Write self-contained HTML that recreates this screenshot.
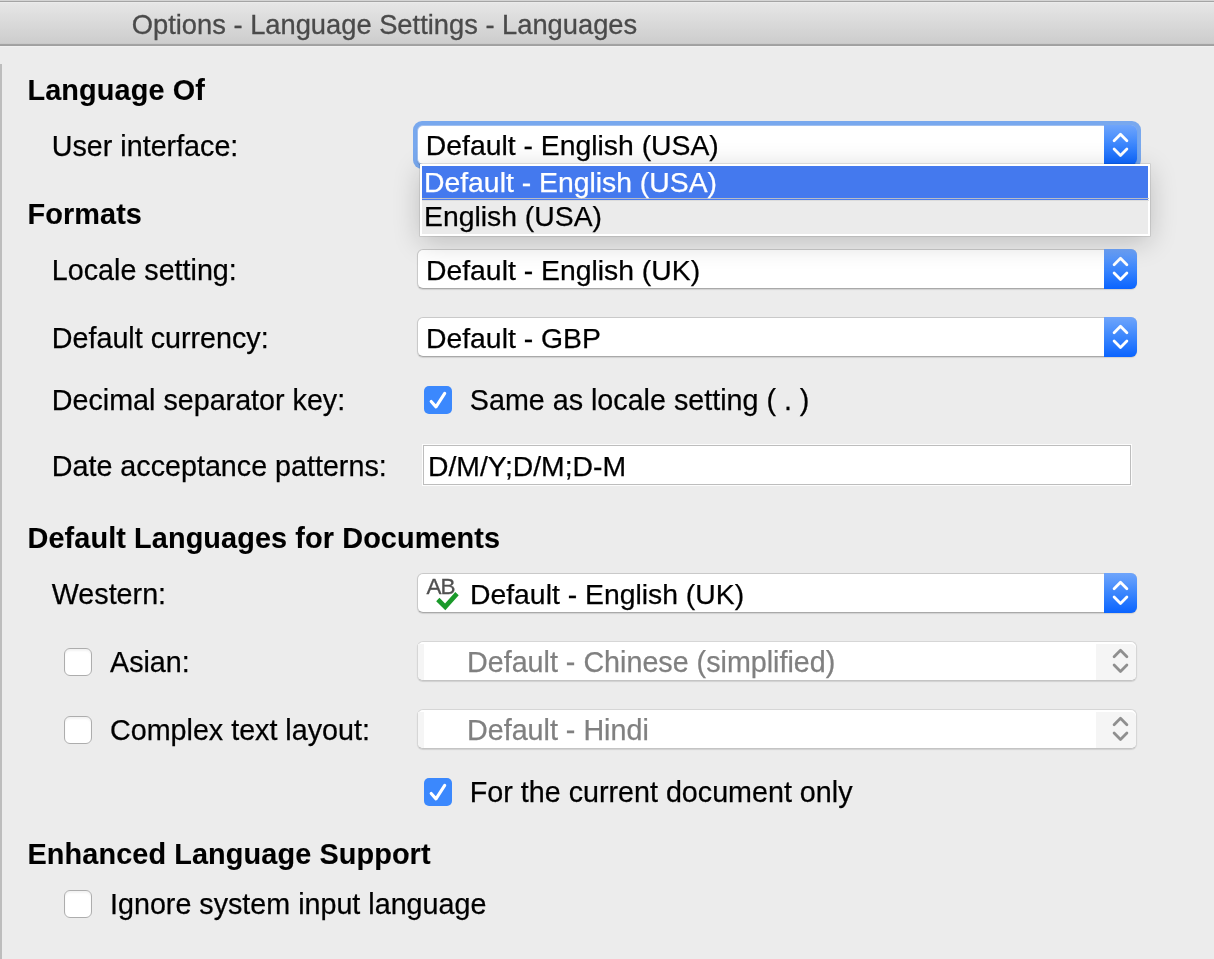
<!DOCTYPE html>
<html><head><meta charset="utf-8">
<style>
html,body{margin:0;padding:0}
body{width:1214px;height:959px;position:relative;overflow:hidden;will-change:transform;background:#ececec;font-family:"Liberation Sans",sans-serif;color:#000}
.t{position:absolute;white-space:nowrap;font-size:28.7px;line-height:34px;-webkit-text-stroke:0.25px currentColor}
.b{font-size:28.85px;letter-spacing:0.1px;-webkit-text-stroke:0.1px currentColor}
.cb .t,.pp .t{font-size:28.35px}
.cb.dis .t{font-size:28.7px}
.b{font-weight:bold}
#hdr{position:absolute;left:0;top:0;width:1214px;height:47px;background:linear-gradient(#d4d4d4 0,#d4d4d4 1px,#a4a4a4 1px,#a4a4a4 2px,#f0f0f0 2px,#e6e6e6 3px,#cdcdcd 43px,#c4c4c4 44px,#a3a3a3 44.5px,#a0a0a0 45.5px,#f2f2f2 46px,#f0f0f0 47px)}
#title{position:absolute;left:131.8px;top:8.2px;-webkit-text-stroke:0.3px #4a4a4a;font-size:27.3px;line-height:34px;color:#4a4a4a;white-space:nowrap}
#lb{position:absolute;left:0;top:64px;width:2px;height:895px;background:#bdbdbd}
.cb{position:absolute;background:#fff;box-sizing:border-box;border:1px solid #c9c9c9;border-bottom-color:#a9a9a9;border-radius:6px;box-shadow:0 1px 1px rgba(0,0,0,.12)}
.cb .step{position:absolute;right:-1px;top:-1px;bottom:-1px;width:33px;border-radius:0 6px 6px 0;background:linear-gradient(#6fa5fb,#3b86fd 50%,#0a64ff)}
.cb .step svg{position:absolute;left:0;top:0}
.cb.dis{border-color:#d6d6d6;border-bottom-color:#c4c4c4}
.cb.dis .strip{position:absolute;left:0;top:2px;bottom:0;width:6px;background:#f5f5f5;border-radius:0 0 0 5px}
.cb.dis .step{background:#f5f5f5;right:0;top:2px;bottom:0;width:40px;border-radius:0 5px 5px 0}
.cb.dis .step svg{left:7.75px;top:-2.6px}
.chk{position:absolute;width:28px;height:28px;box-sizing:border-box;border-radius:5px}
.chk.on{background:#3b88fd}
.chk.off{background:#fff;border:1px solid #adadad;border-radius:6px;box-shadow:inset 0 2px 2px rgba(0,0,0,.05)}
</style></head><body>
<div id="hdr"></div>
<div id="title">Options - Language Settings - Languages</div>
<div id="lb"></div>

<div class="t b" style="left:27.5px;top:73px">Language Of</div>
<div class="t" style="left:51.8px;top:129px">User interface:</div>

<!-- focus ring -->
<div style="position:absolute;left:413px;top:121px;width:728px;height:48px;border-radius:9px;background:#78a8ee"></div>
<div class="cb" style="left:417px;top:125px;width:720px;height:40px;border-color:#9fbff0">
  <div class="t" style="left:7.8px;top:2.3px">Default - English (USA)</div>
  <div class="step"><svg width="33" height="40"><path d="M10.1 15.7 L16.5 9.3 L22.9 15.7 M10.1 24.1 L16.5 30.5 L22.9 24.1" fill="none" stroke="#fff" stroke-width="2.8" stroke-linecap="round" stroke-linejoin="round"/></svg></div>
</div>

<!-- popup -->
<div class="pp" style="position:absolute;z-index:5;left:420px;top:164px;width:730px;height:72px;background:#ebebeb;box-sizing:border-box;border:2px solid #fff;box-shadow:0 0 0 0.6px rgba(0,0,0,.16),0 6px 28px rgba(0,0,0,.2)">
  <div style="position:absolute;left:0;top:0;width:726px;height:32px;background:#4479ee"></div>
  <div style="position:absolute;left:0;top:32px;width:727px;height:1px;background:#b8bcc6"></div>
  <div style="position:absolute;left:0;top:33px;width:726px;height:1px;background:#4a7cee"></div>
  <div style="position:absolute;left:0;top:34px;width:727px;height:1px;background:#dcdcdc"></div>
  <div class="t" style="left:2px;top:-1px;color:#fff">Default - English (USA)</div>
  <div class="t" style="left:2px;top:32.7px">English (USA)</div>
</div>

<div class="t b" style="left:27.5px;top:197px">Formats</div>
<div class="t" style="left:51.8px;top:253px">Locale setting:</div>
<div class="cb" style="left:417px;top:249px;width:720px;height:40px">
  <div class="t" style="left:8px;top:3px">Default - English (UK)</div>
  <div class="step"><svg width="33" height="40"><path d="M10.1 15.7 L16.5 9.3 L22.9 15.7 M10.1 24.1 L16.5 30.5 L22.9 24.1" fill="none" stroke="#fff" stroke-width="2.8" stroke-linecap="round" stroke-linejoin="round"/></svg></div>
</div>

<div class="t" style="left:51.8px;top:321px">Default currency:</div>
<div class="cb" style="left:417px;top:317px;width:720px;height:40px">
  <div class="t" style="left:8px;top:3px">Default - GBP</div>
  <div class="step"><svg width="33" height="40"><path d="M10.1 15.7 L16.5 9.3 L22.9 15.7 M10.1 24.1 L16.5 30.5 L22.9 24.1" fill="none" stroke="#fff" stroke-width="2.8" stroke-linecap="round" stroke-linejoin="round"/></svg></div>
</div>

<div class="t" style="left:51.8px;top:383px">Decimal separator key:</div>
<div class="chk on" style="left:424px;top:386px"><svg width="28" height="28"><path d="M7.2 15.5 L12 20.9 L20.7 7.4" fill="none" stroke="#fff" stroke-width="3.1" stroke-linecap="round" stroke-linejoin="round"/></svg></div>
<div class="t" style="left:469.8px;top:383px">Same as locale setting ( . )</div>

<div class="t" style="left:51.8px;top:449px">Date acceptance patterns:</div>
<div style="position:absolute;left:423px;top:445px;width:708px;height:40px;background:#fff;box-sizing:border-box;border:1px solid #bdbdbd;box-shadow:0 0 0 1px rgba(255,255,255,.85)"></div>
<div class="t" style="left:428px;top:449px;font-size:28.35px">D/M/Y;D/M;D-M</div>

<div class="t b" style="left:27.5px;top:521px">Default Languages for Documents</div>
<div class="t" style="left:51.8px;top:577px">Western:</div>
<div class="cb" style="left:417px;top:573px;width:720px;height:40px">
  <svg style="position:absolute;left:0;top:0" width="50" height="40"><text x="8.5" y="19.8" font-family="Liberation Sans" font-size="22.5" letter-spacing="-1.1" fill="#505050" stroke="#505050" stroke-width="0.3">AB</text><path d="M19.8 25.5 L27.2 32.8 L39 19.6" fill="none" stroke="#1a9a2a" stroke-width="4.6" stroke-linejoin="miter"/></svg>
  <div class="t" style="left:52px;top:3px">Default - English (UK)</div>
  <div class="step"><svg width="33" height="40"><path d="M10.1 15.7 L16.5 9.3 L22.9 15.7 M10.1 24.1 L16.5 30.5 L22.9 24.1" fill="none" stroke="#fff" stroke-width="2.8" stroke-linecap="round" stroke-linejoin="round"/></svg></div>
</div>

<div class="chk off" style="left:64px;top:648px"></div>
<div class="t" style="left:110px;top:645px">Asian:</div>
<div class="cb dis" style="left:417px;top:641px;width:720px;height:40px"><div class="strip"></div>
  <div class="t" style="left:49px;top:3px;color:#808080">Default - Chinese (simplified)</div>
  <div class="step"><svg width="33" height="40"><path d="M10.1 15.7 L16.5 9.3 L22.9 15.7 M10.1 24.1 L16.5 30.5 L22.9 24.1" fill="none" stroke="#8f8f8f" stroke-width="2.8" stroke-linecap="round" stroke-linejoin="round"/></svg></div>
</div>

<div class="chk off" style="left:64px;top:716px"></div>
<div class="t" style="left:110px;top:713px">Complex text layout:</div>
<div class="cb dis" style="left:417px;top:709px;width:720px;height:40px"><div class="strip"></div>
  <div class="t" style="left:49px;top:3px;color:#808080">Default - Hindi</div>
  <div class="step"><svg width="33" height="40"><path d="M10.1 15.7 L16.5 9.3 L22.9 15.7 M10.1 24.1 L16.5 30.5 L22.9 24.1" fill="none" stroke="#8f8f8f" stroke-width="2.8" stroke-linecap="round" stroke-linejoin="round"/></svg></div>
</div>

<div class="chk on" style="left:424px;top:778px"><svg width="28" height="28"><path d="M7.2 15.5 L12 20.9 L20.7 7.4" fill="none" stroke="#fff" stroke-width="3.1" stroke-linecap="round" stroke-linejoin="round"/></svg></div>
<div class="t" style="left:469.8px;top:775px">For the current document only</div>

<div class="t b" style="left:27.5px;top:837px">Enhanced Language Support</div>
<div class="chk off" style="left:64px;top:890px"></div>
<div class="t" style="left:110px;top:887.3px">Ignore system input language</div>
</body></html>
